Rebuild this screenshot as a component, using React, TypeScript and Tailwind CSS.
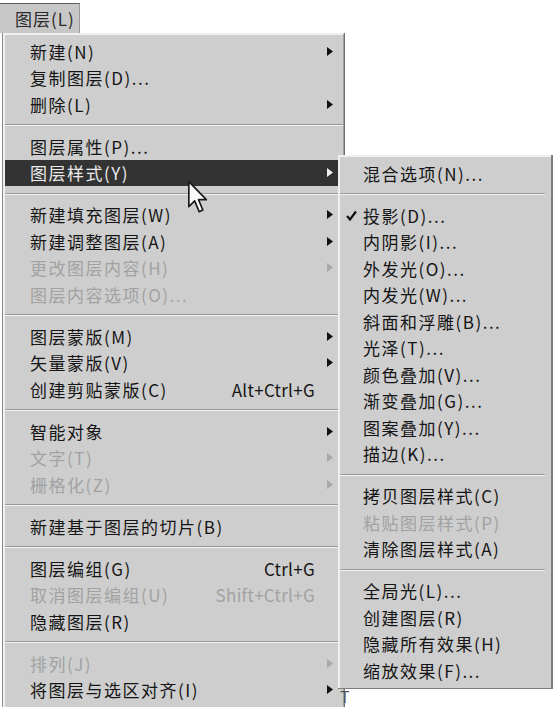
import { ReactElement } from "react";

type row = {
  label: string;
  arrow?: boolean;
  disabled?: boolean;
  shortcut?: string;
  active?: boolean;
  check?: boolean;
};

type entry = row | "sep";

const mainItems: entry[] = [
  { label: "新建(N)", arrow: true },
  { label: "复制图层(D)..." },
  { label: "删除(L)", arrow: true },
  "sep",
  { label: "图层属性(P)..." },
  { label: "图层样式(Y)", arrow: true, active: true },
  "sep",
  { label: "新建填充图层(W)", arrow: true },
  { label: "新建调整图层(A)", arrow: true },
  { label: "更改图层内容(H)", arrow: true, disabled: true },
  { label: "图层内容选项(O)...", disabled: true },
  "sep",
  { label: "图层蒙版(M)", arrow: true },
  { label: "矢量蒙版(V)", arrow: true },
  { label: "创建剪贴蒙版(C)", shortcut: "Alt+Ctrl+G" },
  "sep",
  { label: "智能对象", arrow: true },
  { label: "文字(T)", arrow: true, disabled: true },
  { label: "栅格化(Z)", arrow: true, disabled: true },
  "sep",
  { label: "新建基于图层的切片(B)" },
  "sep",
  { label: "图层编组(G)", shortcut: "Ctrl+G" },
  { label: "取消图层编组(U)", shortcut: "Shift+Ctrl+G", disabled: true },
  { label: "隐藏图层(R)" },
  "sep",
  { label: "排列(J)", arrow: true, disabled: true },
  { label: "将图层与选区对齐(I)", arrow: true },
];

const styleItems: entry[] = [
  { label: "混合选项(N)..." },
  "sep",
  { label: "投影(D)...", check: true },
  { label: "内阴影(I)..." },
  { label: "外发光(O)..." },
  { label: "内发光(W)..." },
  { label: "斜面和浮雕(B)..." },
  { label: "光泽(T)..." },
  { label: "颜色叠加(V)..." },
  { label: "渐变叠加(G)..." },
  { label: "图案叠加(Y)..." },
  { label: "描边(K)..." },
  "sep",
  { label: "拷贝图层样式(C)" },
  { label: "粘贴图层样式(P)", disabled: true },
  { label: "清除图层样式(A)" },
  "sep",
  { label: "全局光(L)..." },
  { label: "创建图层(R)" },
  { label: "隐藏所有效果(H)" },
  { label: "缩放效果(F)..." },
];

function Arrow({ color }: { color: string }) {
  return (
    <svg width="6" height="9" viewBox="0 0 6 9" className="shrink-0">
      <polygon points="0,0 6,4.5 0,9" fill={color} />
    </svg>
  );
}

function Separator() {
  return (
    <div className="flex h-[15.5px] flex-col justify-center">
      <div className="h-px bg-[#9a9a9a]" />
      <div className="h-px bg-[#f2f2f2]" />
    </div>
  );
}

function MenuRow({ item, sub }: { item: row; sub?: boolean }): ReactElement {
  const text = item.active
    ? "text-[#ececec]"
    : item.disabled
      ? "text-[#a2a2a2]"
      : "text-[#151515]";
  const arrowColor = item.active ? "#f0f0f0" : item.disabled ? "#a8a8a8" : "#111";
  return (
    <div
      className={`flex h-[26.5px] items-center ${sub ? "pl-[6px]" : "pl-[25px] pr-[8px]"} ${
        item.active ? "bg-[#333333]" : ""
      } ${text}`}
    >
      {sub ? (
        <div className="flex w-[17px] items-center">
          {item.check ? (
            <svg width="11" height="11" viewBox="0 0 11 11">
              <path d="M1 6 L4 9.5 L10 1.5" fill="none" stroke="#111" strokeWidth="2.2" />
            </svg>
          ) : null}
        </div>
      ) : null}
      <span className="flex-1 whitespace-nowrap tracking-[1.5px]">{item.label}</span>
      {item.shortcut ? (
        <span className="mr-[12px] whitespace-nowrap tracking-[0.3px]">{item.shortcut}</span>
      ) : null}
      {sub ? null : (
        <div className="flex w-[8px] justify-start">
          {item.arrow ? <Arrow color={arrowColor} /> : null}
        </div>
      )}
    </div>
  );
}

export default function App() {
  return (
    <div
      className="relative h-[707px] w-[557px] overflow-hidden bg-white text-[17px] leading-none"
      style={{ fontFamily: '"Noto Sans CJK SC", "Noto Sans", sans-serif' }}
    >
      {/* menu bar */}
      <div className="mt-[3px] flex h-[30px] w-[80px] items-center border-t border-r border-[#5c5c5c] border-r-[#9a9a9a] bg-[#c7c7c7] pl-[15px] tracking-[1px] text-[#2a2a2a]">
        图层(L)
      </div>

      {/* main menu */}
      <div className="ml-[2px] w-[343px] border-l border-r border-[#8a8a8a] border-r-[#707070]">
        <div className="border-t-2 border-l-2 border-r border-[#f0f0f0] border-r-[#a0a0a0] bg-[#cecece] pt-[3px] pb-[20px]">
          {mainItems.map((it, i) =>
            it === "sep" ? <Separator key={i} /> : <MenuRow key={i} item={it} />,
          )}
        </div>
      </div>

      {/* layer style submenu */}
      <div className="absolute top-[155px] left-[338px] w-[215px] border-r-2 border-b border-[#7e7e7e]">
        <div className="border-t-2 border-l-2 border-[#f0f0f0] bg-[#cecece] pt-[3px] pb-[4px] pr-[6px]">
          {styleItems.map((it, i) =>
            it === "sep" ? <Separator key={i} /> : <MenuRow key={i} item={it} sub />,
          )}
        </div>
      </div>

      <span className="absolute top-[688px] left-[340px] text-[16px] text-[#555]">T</span>

      {/* mouse pointer */}
      <svg
        width="22"
        height="35"
        viewBox="0 0 13 21"
        className="absolute top-[180px] left-[187px]"
      >
        <path
          d="M1 1 L1 16 L4.5 12.5 L7.2 19 L9.4 18 L6.8 11.8 L11.5 11.8 Z"
          fill="#fafafa"
          stroke="#1a1a1a"
          strokeWidth="1"
          strokeLinejoin="round"
        />
      </svg>
    </div>
  );
}
